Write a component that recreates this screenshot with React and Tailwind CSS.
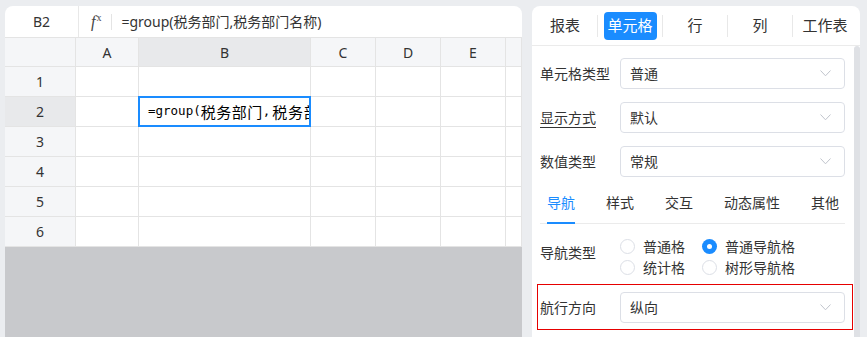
import React from 'react';

const cols = [
  { key: '', w: 'w-[71px]' },
  { key: 'A', w: 'w-[63px]' },
  { key: 'B', w: 'w-[172px]' },
  { key: 'C', w: 'w-[65px]' },
  { key: 'D', w: 'w-[65px]' },
  { key: 'E', w: 'w-[65px]' },
  { key: 'F', w: 'w-[16px]' },
];

const Chevron = () => (
  <svg width="11" height="7" viewBox="0 0 11 7" fill="none">
    <polyline points="0.5,0.5 5.5,5.8 10.5,0.5" stroke="#c0c4cc" strokeWidth="1" />
  </svg>
);

const Select = ({ value }) => (
  <div className="flex h-[31px] w-[225px] shrink-0 items-center justify-between rounded border border-[#dcdfe6] pl-[9px] pr-[13px] text-[14px] text-[#333]">
    <span>{value}</span>
    <Chevron />
  </div>
);

const FormRow = ({ label, value, underline }) => (
  <div className="flex items-center">
    <div className="w-[80px] shrink-0 text-[14px] text-[#333]">
      <span className={underline ? 'underline underline-offset-[4px]' : ''}>{label}</span>
    </div>
    <Select value={value} />
  </div>
);

const Radio = ({ label, checked }) => (
  <div className="flex h-[21px] items-center gap-[8px]">
    {checked ? (
      <span className="flex h-[15px] w-[15px] items-center justify-center rounded-full bg-[#1a8cff]">
        <span className="h-[5px] w-[5px] rounded-full bg-white" />
      </span>
    ) : (
      <span className="h-[15px] w-[15px] rounded-full border border-[#dcdfe6] bg-white" />
    )}
    <span className="text-[14px] text-[#333]">{label}</span>
  </div>
);

const Sheet = () => {
  const rows = [1, 2, 3, 4, 5, 6];
  return (
    <div className="flex w-[517px] shrink-0 flex-col overflow-hidden rounded-t-lg bg-white">
      <div className="flex h-[32px] items-center border-b border-[#e4e4e4] text-[14px] text-[#333]">
        <div className="flex h-full w-[74px] items-center justify-center border-r border-[#e8e8e8]">B2</div>
        <div className="ml-[12px] flex items-start text-[#444]">
          <span className="font-['Liberation_Serif',serif] text-[16px] italic leading-none">f</span>
          <span className="ml-[1px] -mt-[1px] font-['Liberation_Serif',serif] text-[10px] leading-none">x</span>
        </div>
        <div className="ml-[10px] h-[16px] w-px bg-[#e4e4e4]" />
        <div className="ml-[9px] whitespace-nowrap">=group(税务部门,税务部门名称)</div>
      </div>

      <div className="flex h-[29px] border-b border-[#e4e4e4] bg-[#f5f6f8] text-[14px] text-[#333]">
        {cols.map((c) => (
          <div
            key={c.key || 'corner'}
            className={`${c.w} flex items-center justify-center border-r border-[#e4e4e4] ${c.key === 'B' ? 'bg-[#e8e9eb]' : ''}`}
          >
            {c.key === 'F' ? '' : c.key}
          </div>
        ))}
      </div>

      {rows.map((r) => (
        <div key={r} className="flex h-[30px] border-b border-[#e4e4e4] text-[14px] text-[#333]">
          {cols.map((c, i) => {
            if (i === 0) {
              return (
                <div
                  key="h"
                  className={`${c.w} flex items-center justify-center border-r border-[#e4e4e4] ${r === 2 ? 'bg-[#e8e9eb]' : 'bg-[#f5f6f8]'}`}
                >
                  {r}
                </div>
              );
            }
            if (r === 2 && c.key === 'B') {
              // selected cell, text runs past the edge and is clipped
              return (
                <div key={c.key} className={`${c.w} relative border-r border-[#e4e4e4]`}>
                  <div className="absolute -bottom-px -left-px -right-px -top-px flex items-center overflow-hidden whitespace-nowrap border-2 border-[#1a8cff] pl-[8px] text-black">
                    <span className="font-['DejaVu_Sans_Mono',monospace] text-[12.5px]">=group(</span>
                    <span className="text-[15px] leading-5 tracking-[0.5px]">税务部门</span>
                    <span className="mr-[2px] font-['DejaVu_Sans_Mono',monospace] text-[12.5px]">,</span>
                    <span className="text-[15px] leading-5 tracking-[0.8px]">税务部门名称</span>
                    <span className="font-['DejaVu_Sans_Mono',monospace] text-[12.5px]">)</span>
                  </div>
                </div>
              );
            }
            return <div key={c.key} className={`${c.w} border-r border-[#e4e4e4]`} />;
          })}
        </div>
      ))}

      <div className="flex-1 bg-[#c8c9cc]" />
    </div>
  );
};

const Panel = () => {
  const tabs = ['报表', '单元格', '行', '列', '工作表'];
  const subTabs = ['导航', '样式', '交互', '动态属性', '其他'];
  return (
    <div className="flex w-[328px] shrink-0 flex-col overflow-hidden rounded-t-lg bg-white text-[14px] text-[#333]">
      <div className="flex h-[40px] shrink-0 items-center border-b border-[#ebebeb] pl-[1px]">
        {tabs.map((t, i) => (
          <React.Fragment key={t}>
            {i > 0 && <div className="h-[22px] w-px bg-[#e8e8e8]" />}
            <div className="flex w-[64px] items-center justify-center">
              {t === '单元格' ? (
                <div className="flex h-[28px] w-[53px] items-center justify-center rounded bg-[#1a8cff] text-[15px] text-white">
                  {t}
                </div>
              ) : (
                <span className="text-[15px]">{t}</span>
              )}
            </div>
          </React.Fragment>
        ))}
      </div>

      <div className="flex flex-1">
        <div className="w-[322px] shrink-0 pl-[8px] pr-[9px]">
          <div className="flex flex-col gap-[13px] pt-[12px]">
            <FormRow label="单元格类型" value="普通" />
            <FormRow label="显示方式" value="默认" underline />
            <FormRow label="数值类型" value="常规" />
          </div>

          <div className="mt-[1px] flex h-[46px] items-end gap-[31px] border-b border-[#ebebeb] pl-[7px]">
            {subTabs.map((t, i) => (
              <div
                key={t}
                className={`-mb-px border-b-2 pb-[9px] leading-5 ${i === 0 ? 'border-[#1a8cff] text-[#1a8cff]' : 'border-transparent'}`}
              >
                {t}
              </div>
            ))}
          </div>

          <div className="mt-[12px] flex">
            <div className="w-[80px] pt-[6px]">导航类型</div>
            <div className="grid grid-cols-[82px_auto]">
              <Radio label="普通格" />
              <Radio label="普通导航格" checked />
              <Radio label="统计格" />
              <Radio label="树形导航格" />
            </div>
          </div>

          <div className="-ml-[3px] mt-[6px] flex w-[316px] items-center border border-[#e60000] pb-[6px] pl-[2px] pt-[7px]">
            <div className="w-[80px] shrink-0">航行方向</div>
            <Select value="纵向" />
          </div>
        </div>
        <div className="w-[6px] shrink-0 rounded-t bg-[#dfe1e5]" />
      </div>
    </div>
  );
};

export default function App() {
  return (
    <div className="flex h-[337px] w-[867px] gap-[10px] overflow-hidden bg-[#ebedf0] pl-[5px] pt-[6px] font-['Noto_Sans','Noto_Sans_CJK_SC',sans-serif]">
      <Sheet />
      <Panel />
    </div>
  );
}
